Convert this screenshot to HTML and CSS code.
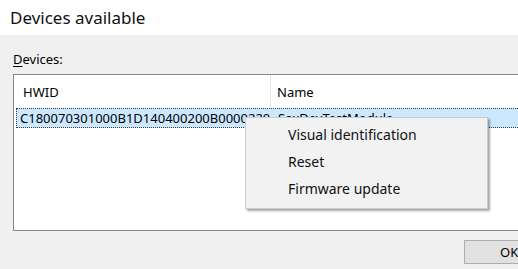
FILE: index.html
```html
<!DOCTYPE html>
<html lang="en">
<head>
  <meta charset="UTF-8" />
  <title>Devices available</title>
  <link rel="stylesheet" href="styles.css">
</head>
<body>

  <div class="dialog">
    <div class="title-bar">Devices available</div>

    <div class="content">
      <div class="label"><u>D</u>evices:</div>

      <div class="list-view">
        <div class="list-header">
          <div class="col col-hwid">HWID</div>
          <div class="col col-name">Name</div>
        </div>
        <div class="list-row selected">
          <div class="col col-hwid">C180070301000B1D140400200B0000220</div>
          <div class="col col-name">SaxDevTestModule</div>
        </div>
      </div>

      <div class="buttons">
        <button class="btn">OK</button>
      </div>
    </div>

    <!-- Context menu -->
    <ul class="context-menu">
      <li>Visual identification</li>
      <li>Reset</li>
      <li>Firmware update</li>
    </ul>
  </div>

</body>
</html>
```

FILE: styles.css
```css
/* Reset */
* {
  margin: 0;
  padding: 0;
  box-sizing: border-box;
}

body {
  font-family: 'Noto Sans', 'Open Sans', sans-serif;
  font-size: 13px;
  color: #000;
  background: #f0f0f0;
  overflow: hidden;
}

.dialog {
  position: relative;
  width: 518px;
  height: 269px;
  overflow: hidden;
}

/* Title */
.title-bar {
  height: 35px;
  background: #fff;
  padding: 6px 0 0 10px;
  font-size: 17px;
  color: #111;
}

.content {
  padding: 15px 0 0 13px;
}

.label {
  height: 24px;
}

.label u {
  text-decoration-thickness: 1px;
  text-underline-offset: 2px;
}

/* List view */
.list-view {
  width: 505px;
  height: 157px;
  background: #fff;
  border: 1px solid #828790;
  border-right: none;
  overflow: hidden;
}

.list-header,
.list-row {
  display: flex;
}

.list-header {
  height: 33px;
  align-items: center;
}

.list-header .col-hwid {
  padding-left: 9px;
  height: 100%;
  display: flex;
  align-items: center;
  border-right: 1px solid #e5e5e5;
}

.list-header .col-name {
  padding-left: 6px;
}

.col-hwid {
  width: 257px;
  flex: none;
}

.list-row {
  height: 20px;
  margin-left: 2px;
  align-items: center;
  white-space: nowrap;
}

.list-row.selected {
  background: #cce8ff;
  border: 1px dotted #3c3c3c;
  border-right: none;
}

.list-row .col-hwid {
  width: 255px;
  padding-left: 3px;
  overflow: hidden;
}

.list-row .col-name {
  padding-left: 6px;
}

/* Buttons */
.buttons {
  display: flex;
  justify-content: flex-end;
  padding-top: 9px;
}

.btn {
  width: 54px;
  height: 24px;
  font-family: inherit;
  font-size: 13px;
  text-align: left;
  padding-left: 35px;
  background: #e1e1e1;
  border: 1px solid #adadad;
  border-right: none;
}

/* Context menu */
.context-menu {
  position: absolute;
  left: 245px;
  top: 117px;
  width: 243px;
  list-style: none;
  background: #f2f2f2;
  border: 1px solid #cccccc;
  box-shadow: 2px 2px 2px rgba(0, 0, 0, 0.35);
  padding: 3px 0 6px;
}

.context-menu li {
  height: 27px;
  line-height: 27px;
  padding-left: 42px;
  font-size: 14px;
  color: #111;
}
```
